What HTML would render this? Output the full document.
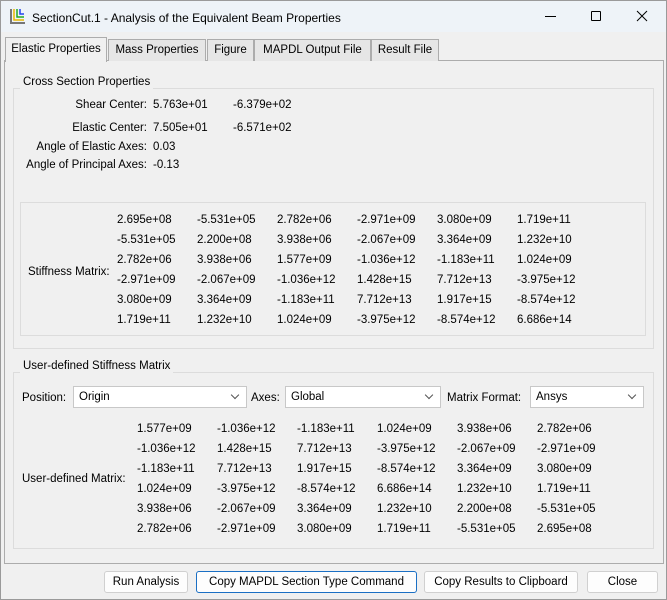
<!DOCTYPE html>
<html><head><meta charset="utf-8"><style>
*{margin:0;padding:0;box-sizing:border-box}
body{width:667px;height:600px;background:#f0f0f0;font-family:"Liberation Sans",sans-serif;font-size:11.5px;color:#000;position:relative;overflow:hidden}
.a{position:absolute;white-space:nowrap;line-height:14px;margin-top:2px}
.r{text-align:right}
.box{position:absolute;border:1px solid #dcdcdc}
.tab{position:absolute;top:39px;height:22px;background:#e6e6e6;border:1px solid #acacac;border-bottom:none;text-align:center;line-height:21px}
.cb{position:absolute;height:22px;background:#fff;border:1px solid #c8c8c8;padding-left:5px;line-height:21px}
.cb:after{content:"";position:absolute;right:8px;top:5px;width:5px;height:5px;border-right:1px solid #555;border-bottom:1px solid #555;transform:rotate(45deg)}
.btn{position:absolute;top:571px;height:22px;background:#fdfdfd;border:1px solid #d0d0d0;border-radius:3px;text-align:center;line-height:21px}
</style></head><body>
<div style="position:absolute;left:0;top:0;width:667px;height:600px;border:1px solid #9a9a9a"></div>
<div style="position:absolute;left:1px;top:1px;width:665px;height:31px;background:#eef3f8"></div>
<svg style="position:absolute;left:10px;top:8px" width="16" height="16"><path d="M1 1V15H15" stroke="#777" stroke-width="2" fill="none"/><path d="M4 1V12H14" stroke="#e8b800" stroke-width="1.5" fill="none"/><path d="M7 1V9H14" stroke="#22aa22" stroke-width="1.5" fill="none"/><path d="M10 1V6H14" stroke="#2244ee" stroke-width="1.5" fill="none"/></svg>
<div class="a" style="left:32px;top:9px;font-size:12px">SectionCut.1 - Analysis of the Equivalent Beam Properties</div>
<div style="position:absolute;left:545px;top:16px;width:11px;height:1px;background:#000"></div>
<div style="position:absolute;left:591px;top:11px;width:10px;height:10px;border:1px solid #000;border-radius:1px"></div>
<svg style="position:absolute;left:636px;top:10px" width="12" height="12"><path d="M1 1L11 11M11 1L1 11" stroke="#000" stroke-width="1"/></svg>
<div style="position:absolute;left:4px;top:60px;width:660px;height:504px;border:1px solid #acacac;background:#f0f0f0"></div>
<div class="tab" style="left:5px;top:37px;width:102px;height:25px;background:#f0f0f0;z-index:2;line-height:23px">Elastic Properties</div>
<div class="tab" style="left:108px;width:98px">Mass Properties</div>
<div class="tab" style="left:207px;width:47px">Figure</div>
<div class="tab" style="left:254px;width:117px">MAPDL Output File</div>
<div class="tab" style="left:371px;width:68px">Result File</div>
<div class="box" style="left:13px;top:88px;width:641px;height:261px"></div>
<div class="a" style="left:20px;top:73px;padding:0 3px;background:#f0f0f0">Cross Section Properties</div>
<div class="a r" style="left:0;width:147px;top:96px">Shear Center:</div><div class="a" style="left:153px;top:96px">5.763e+01</div><div class="a" style="left:233px;top:96px">-6.379e+02</div>
<div class="a r" style="left:0;width:147px;top:119px">Elastic Center:</div><div class="a" style="left:153px;top:119px">7.505e+01</div><div class="a" style="left:233px;top:119px">-6.571e+02</div>
<div class="a r" style="left:0;width:147px;top:138px">Angle of Elastic Axes:</div><div class="a" style="left:153px;top:138px">0.03</div>
<div class="a r" style="left:0;width:147px;top:156px">Angle of Principal Axes:</div><div class="a" style="left:153px;top:156px">-0.13</div>
<div class="box" style="left:20px;top:202px;width:626px;height:134px"></div>
<div class="a" style="left:28px;top:263px">Stiffness Matrix:</div>
<div id="m1"></div>
<div class="box" style="left:13px;top:372px;width:641px;height:177px"></div>
<div class="a" style="left:20px;top:357px;padding:0 3px;background:#f0f0f0">User-defined Stiffness Matrix</div>
<div class="a" style="left:22px;top:389px">Position:</div>
<div class="cb" style="left:73px;top:386px;width:174px">Origin</div>
<div class="a" style="left:251px;top:389px">Axes:</div>
<div class="cb" style="left:285px;top:386px;width:156px">Global</div>
<div class="a" style="left:447px;top:389px">Matrix Format:</div>
<div class="cb" style="left:530px;top:386px;width:114px">Ansys</div>
<div class="a" style="left:22px;top:470px">User-defined Matrix:</div>
<div id="m2"></div>
<div class="btn" style="left:104px;width:84px">Run Analysis</div>
<div class="btn" style="left:196px;width:221px;border-color:#1a6fc4">Copy MAPDL Section Type Command</div>
<div class="btn" style="left:424px;width:154px">Copy Results to Clipboard</div>
<div class="btn" style="left:587px;width:71px">Close</div>
<script>
var A=[["2.695e+08","-5.531e+05","2.782e+06","-2.971e+09","3.080e+09","1.719e+11"],["-5.531e+05","2.200e+08","3.938e+06","-2.067e+09","3.364e+09","1.232e+10"],["2.782e+06","3.938e+06","1.577e+09","-1.036e+12","-1.183e+11","1.024e+09"],["-2.971e+09","-2.067e+09","-1.036e+12","1.428e+15","7.712e+13","-3.975e+12"],["3.080e+09","3.364e+09","-1.183e+11","7.712e+13","1.917e+15","-8.574e+12"],["1.719e+11","1.232e+10","1.024e+09","-3.975e+12","-8.574e+12","6.686e+14"]];
var B=[["1.577e+09","-1.036e+12","-1.183e+11","1.024e+09","3.938e+06","2.782e+06"],["-1.036e+12","1.428e+15","7.712e+13","-3.975e+12","-2.067e+09","-2.971e+09"],["-1.183e+11","7.712e+13","1.917e+15","-8.574e+12","3.364e+09","3.080e+09"],["1.024e+09","-3.975e+12","-8.574e+12","6.686e+14","1.232e+10","1.719e+11"],["3.938e+06","-2.067e+09","3.364e+09","1.232e+10","2.200e+08","-5.531e+05"],["2.782e+06","-2.971e+09","3.080e+09","1.719e+11","-5.531e+05","2.695e+08"]];
function put(id,M,x0,y0){var h="";for(var r=0;r<6;r++)for(var c=0;c<6;c++)h+='<div class="a" style="left:'+(x0+c*80)+'px;top:'+(y0+r*20)+'px">'+M[r][c]+'</div>';document.getElementById(id).innerHTML=h;}
put("m1",A,117,211);put("m2",B,137,420);
</script>
</body></html>
